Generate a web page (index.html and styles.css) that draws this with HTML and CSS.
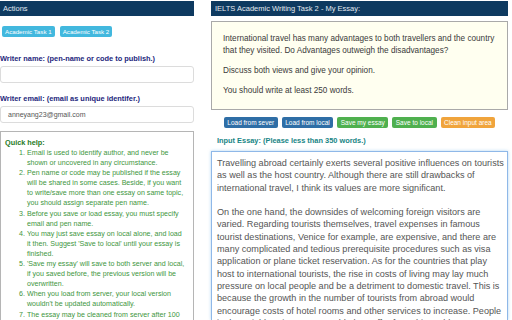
FILE: index.html
```html
<!DOCTYPE html>
<html>
<head>
<meta charset="utf-8">
<link rel="stylesheet" href="styles.css">
</head>
<body>
<div class="page">
  <div class="left">
    <div class="bar">Actions</div>
    <div class="tasks">
      <span class="btn info">Academic Task 1</span>
      <span class="btn info">Academic Task 2</span>
    </div>
    <div class="label">Writer name: (pen-name or code to publish.)</div>
    <div class="input"></div>
    <div class="label label-email">Writer email: (email as unique identifer.)</div>
    <div class="input">anneyang23@gmail.com</div>
    <div class="help">
      <div class="help-title">Quick help:</div>
      <ol>
        <li>Email is used to identify author, and never be shown or uncovered in any circumstance.</li>
        <li>Pen name or code may be published if the essay will be shared in some cases. Beside, if you want to write/save more than one essay on same topic, you should assign separate pen name.</li>
        <li>Before you save or load essay, you must specify email and pen name.</li>
        <li>You may just save essay on local alone, and load it then. Suggest 'Save to local' until your essay is finished.</li>
        <li>'Save my essay' will save to both server and local, if you saved before, the previous version will be overwritten.</li>
        <li>When you load from server, your local version wouldn't be updated automatically.</li>
        <li>The essay may be cleaned from server after 100 days without any update.</li>
      </ol>
    </div>
  </div>
  <div class="right">
    <div class="bar">IELTS Academic Writing Task 2 - My Essay:</div>
    <div class="prompt">
      <p>International travel has many advantages to both travellers and the country that they visited. Do Advantages outweigh the disadvantages?</p>
      <p>Discuss both views and give your opinion.</p>
      <p>You should write at least 250 words.</p>
    </div>
    <div class="actions">
      <span class="btn primary">Load from sever</span>
      <span class="btn primary">Load from local</span>
      <span class="btn success">Save my essay</span>
      <span class="btn success">Save to local</span>
      <span class="btn warning">Clean input area</span>
    </div>
    <div class="essay-label">Input Essay: (Please less than 350 words.)</div>
    <div class="essay">
      <p>Travelling abroad certainly exerts several positive influences on tourists as well as the host country. Although there are still drawbacks of international travel, I think its values are more significant.</p>
      <p>On the one hand, the downsides of welcoming foreign visitors are varied. Regarding tourists themselves, travel expenses in famous tourist destinations, Venice for example, are expensive, and there are many complicated and tedious prerequisite procedures such as visa application or plane ticket reservation. As for the countries that play host to international tourists, the rise in costs of living may lay much pressure on local people and be a detriment to domestic travel. This is because the growth in the number of tourists from abroad would encourage costs of hotel rooms and other services to increase. People in the neighbouring areas would also suffer from this problem.</p>
    </div>
  </div>
</div>
</body>
</html>
```
FILE: styles.css
```css
html, body {
  margin: 0;
  padding: 0;
  background: #ffffff;
  overflow: hidden;
}
body {
  font-family: "Liberation Sans", Arial, sans-serif;
  width: 512px;
  height: 320px;
}
.page {
  display: flex;
  gap: 17px;
  padding: 1px 4px 0 0;
  height: 319px;
}
.left {
  width: 194px;
  flex: none;
  display: flex;
  flex-direction: column;
}
.right {
  flex: 1;
  display: flex;
  flex-direction: column;
  min-width: 0;
}
.bar {
  height: 15px;
  line-height: 15px;
  background: #0e3a60;
  color: #e3e9f0;
  font-size: 7.5px;
  padding-left: 3px;
  flex: none;
}
.right .bar {
  padding-left: 4px;
}
.tasks {
  display: flex;
  gap: 5px;
  margin-top: 10px;
  padding-left: 2px;
  height: 11px;
}
.btn {
  display: inline-block;
  height: 11px;
  line-height: 11px;
  padding: 0 3px;
  font-size: 6.2px;
  color: #ffffff;
  border-radius: 2px;
  white-space: nowrap;
}
.actions .btn {
  font-size: 6.5px;
  padding: 0 3.5px;
}
.info {
  background: #42b8de;
}
.primary {
  background: #2f6ea6;
}
.success {
  background: #4fb04f;
}
.warning {
  background: #f0a43c;
}
.label {
  margin-top: 17px;
  font-size: 7.4px;
  font-weight: bold;
  color: #1d1f7c;
  line-height: 9px;
  white-space: nowrap;
}
.label-email {
  margin-top: 11px;
}
.input {
  margin-top: 3px;
  height: 15px;
  border: 1px solid #dcdcdc;
  border-radius: 3px;
  font-size: 7px;
  line-height: 15px;
  color: #555555;
  padding-left: 7px;
}
.help {
  margin-top: 8px;
  flex: 1;
  border: 1px solid #b5b5b5;
  border-bottom: none;
  padding: 6px 6px 0 4px;
  overflow: hidden;
}
.help-title {
  font-size: 7.3px;
  font-weight: bold;
  color: #1f7a1f;
  line-height: 10px;
}
.help ol {
  margin: 0;
  padding-left: 22px;
  font-size: 7.1px;
  line-height: 10.1px;
  color: #3e963e;
}
.prompt {
  margin-top: 5px;
  height: 89px;
  flex: none;
  box-sizing: border-box;
  background: #fffff0;
  border: 1px solid #a9a9a9;
  padding: 11px 8px 0 11px;
  font-size: 8.2px;
  line-height: 12px;
  color: #3a3a3a;
}
.prompt p {
  margin: 0 0 8px 0;
}
.actions {
  display: flex;
  justify-content: center;
  gap: 4px;
  margin-top: 7px;
}
.essay-label {
  margin-top: 8px;
  padding-left: 6px;
  font-size: 7.4px;
  font-weight: bold;
  color: #178585;
  line-height: 10px;
}
.essay {
  margin-top: 5px;
  flex: 1;
  border: 1px solid #8fb8e8;
  border-bottom: none;
  box-shadow: 0 0 3px rgba(102, 175, 233, 0.5);
  padding: 5px 2px 0 5px;
  font-size: 9.1px;
  line-height: 12.3px;
  color: #555555;
  overflow: hidden;
}
.essay p {
  margin: 0 0 12.3px 0;
}
```
